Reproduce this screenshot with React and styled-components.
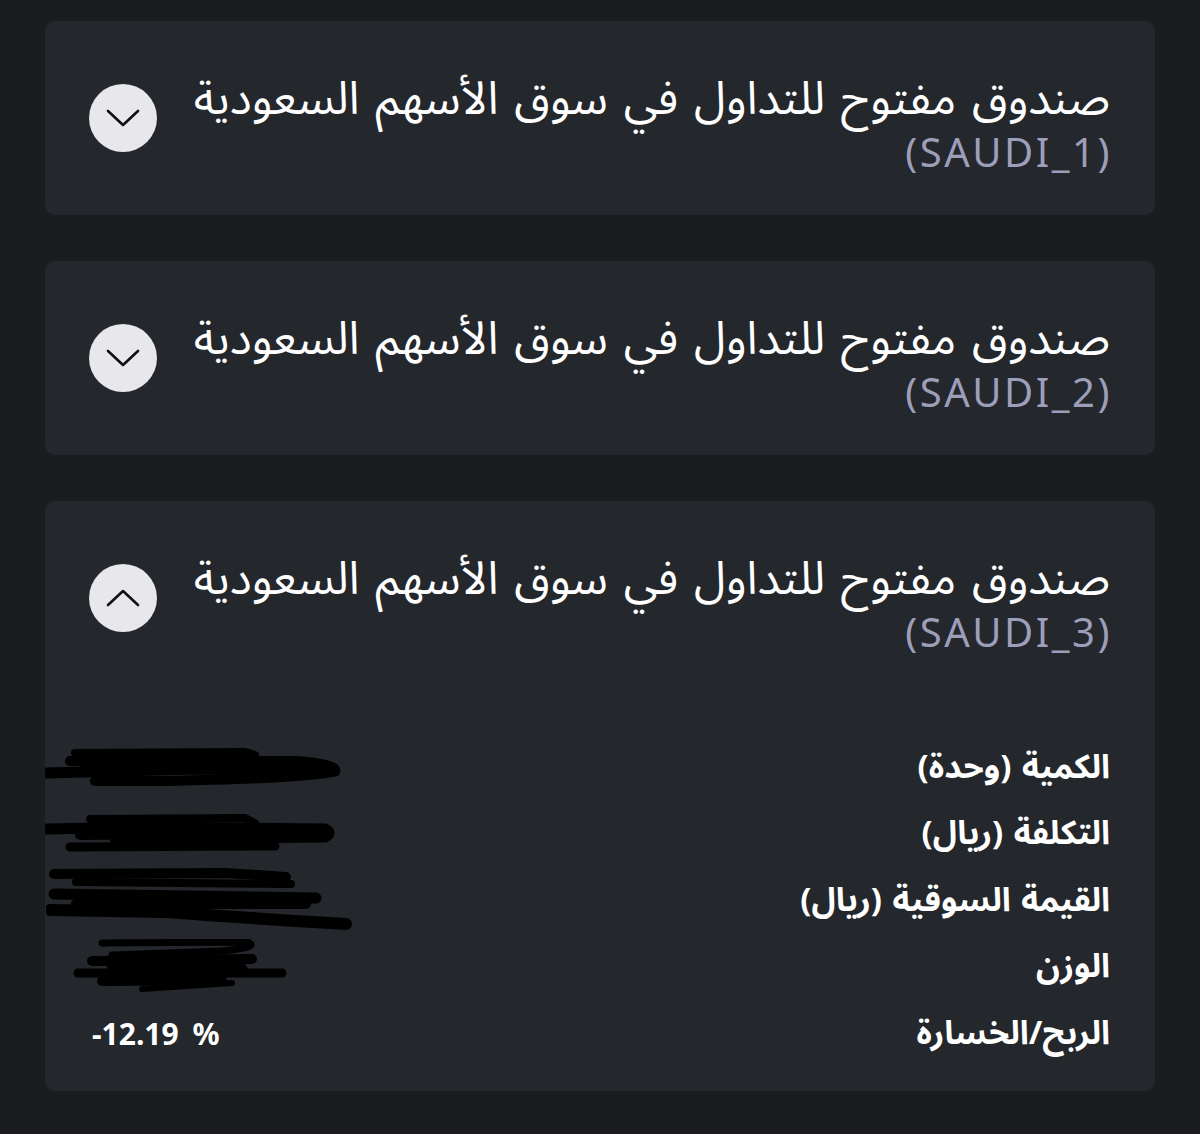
import React from "react";
import styled, { createGlobalStyle } from "styled-components";

const GlobalStyle = createGlobalStyle`
  html, body {
    margin: 0;
    padding: 0;
    background: #1b1c20;
  }
  body {
    font-family: "Noto Sans Arabic", "Noto Sans", "DejaVu Sans", sans-serif;
    color: #ffffff;
  }
`;

const Page = styled.div`
  direction: rtl;
  width: 1110px;
  padding: 21px 45px 44px;
  display: flex;
  flex-direction: column;
  gap: 46px;
`;

const Card = styled.section`
  background: #24272c;
  border-radius: 10px;
  padding: 53px 45px 37px 44px;
`;

const Header = styled.div`
  display: flex;
  align-items: flex-start;
  justify-content: space-between;
`;

const TitleBlock = styled.div`
  text-align: right;
`;

const Title = styled.div`
  color: #ffffff;
  font-size: 46px;
  line-height: 52px;
  height: 52px;
  word-spacing: 4px;
  white-space: nowrap;
`;

const Code = styled.div`
  color: #9d9eb9;
  font-family: "Noto Sans", "Open Sans", sans-serif;
  font-size: 40px;
  line-height: 52px;
  height: 52px;
  direction: ltr;
  text-align: right;
  letter-spacing: 2.5px;
  margin-right: -2px;
`;

const Toggle = styled.button`
  width: 68px;
  height: 68px;
  border-radius: 50%;
  border: none;
  background: #e8e8ec;
  margin-top: 10px;
  display: flex;
  align-items: center;
  justify-content: center;
  padding: 0;
  cursor: pointer;
  svg {
    transform: ${(p) => (p.open ? "rotate(180deg)" : "none")};
  }
`;

const Details = styled.div`
  margin-top: 76px;
  margin-bottom: -13px;
  padding-left: 3px;
  display: flex;
  flex-direction: column;
`;

const Row = styled.div`
  height: 66.5px;
  display: flex;
  align-items: center;
  justify-content: space-between;
`;

const Label = styled.div`
  font-size: 33px;
  font-weight: 700;
  word-spacing: 2px;
`;

const Value = styled.div`
  direction: ltr;
  font-family: "Noto Sans", "Open Sans", sans-serif;
  font-size: 30px;
  font-weight: 700;
  display: flex;
  align-items: center;
  width: 320px;
  justify-content: flex-start;
`;

const Percent = styled.span`
  word-spacing: 6px;
`;

const Scribble = styled.svg`
  display: block;
  margin-left: ${(p) => p.shift || 0}px;
`;

const Chevron = () => (
  <svg width="34" height="18" viewBox="0 0 34 18" fill="none">
    <path d="M2 2 L17 16 L32 2" stroke="#111" strokeWidth="2.6" strokeLinecap="round" strokeLinejoin="round" />
  </svg>
);

const scribbles = [
  {
    w: 300, h: 40, shift: -47,
    strokes: [
      ["M30 6 L200 5 L210 8", 8],
      ["M25 14 L250 14 Q292 17 290 24 Q270 31 120 34 L50 34", 10],
      ["M2 26 L150 22 L290 24", 11],
      ["M40 18 L220 20", 10],
    ],
  },
  {
    w: 290, h: 42, shift: -47,
    strokes: [
      ["M45 6 L200 5 L210 10", 8],
      ["M2 16 L100 14 L280 16 Q288 20 280 24 L70 26", 11],
      ["M35 22 L250 20", 10],
      ["M25 34 L230 33", 9],
    ],
  },
  {
    w: 310, h: 64, shift: -46,
    strokes: [
      ["M8 6 L180 5 L240 9", 10],
      ["M30 14 L245 16", 8],
      ["M8 26 L270 30", 11],
      ["M30 36 L260 36", 10],
      ["M4 42 L120 44 Q200 50 300 56", 12],
    ],
  },
  {
    w: 240, h: 56, shift: -20,
    strokes: [
      ["M30 4 L175 3 Q190 8 150 12 L40 16", 7],
      ["M20 22 L180 20", 10],
      ["M6 34 L210 34", 9],
      ["M40 30 L170 30", 11],
      ["M30 42 L150 41", 10],
      ["M70 50 L160 44", 6],
    ],
  },
];

const rows = ["الكمية (وحدة)", "التكلفة (ريال)", "القيمة السوقية (ريال)", "الوزن"];

const funds = [
  { code: "SAUDI_1", open: false },
  { code: "SAUDI_2", open: false },
  { code: "SAUDI_3", open: true },
];

export default function App() {
  return (
    <>
      <GlobalStyle />
      <Page>
        {funds.map((f) => (
          <Card key={f.code}>
            <Header>
              <TitleBlock>
                <Title>صندوق مفتوح للتداول في سوق الأسهم السعودية</Title>
                <Code>({f.code})</Code>
              </TitleBlock>
              <Toggle open={f.open} aria-label="toggle">
                <Chevron />
              </Toggle>
            </Header>
            {f.open && (
              <Details>
                {rows.map((label, i) => {
                  const s = scribbles[i];
                  return (
                    <Row key={label}>
                      <Label>{label}</Label>
                      <Value>
                        <Scribble shift={s.shift} width={s.w} height={s.h} viewBox={`0 0 ${s.w} ${s.h}`}>
                          {s.strokes.map(([d, sw], j) => (
                            <path key={j} d={d} stroke="#000" strokeWidth={sw} strokeLinecap="round" fill="none" />
                          ))}
                        </Scribble>
                      </Value>
                    </Row>
                  );
                })}
                <Row>
                  <Label>الربح/الخسارة</Label>
                  <Value>
                    <Percent>-12.19 %</Percent>
                  </Value>
                </Row>
              </Details>
            )}
          </Card>
        ))}
      </Page>
    </>
  );
}
